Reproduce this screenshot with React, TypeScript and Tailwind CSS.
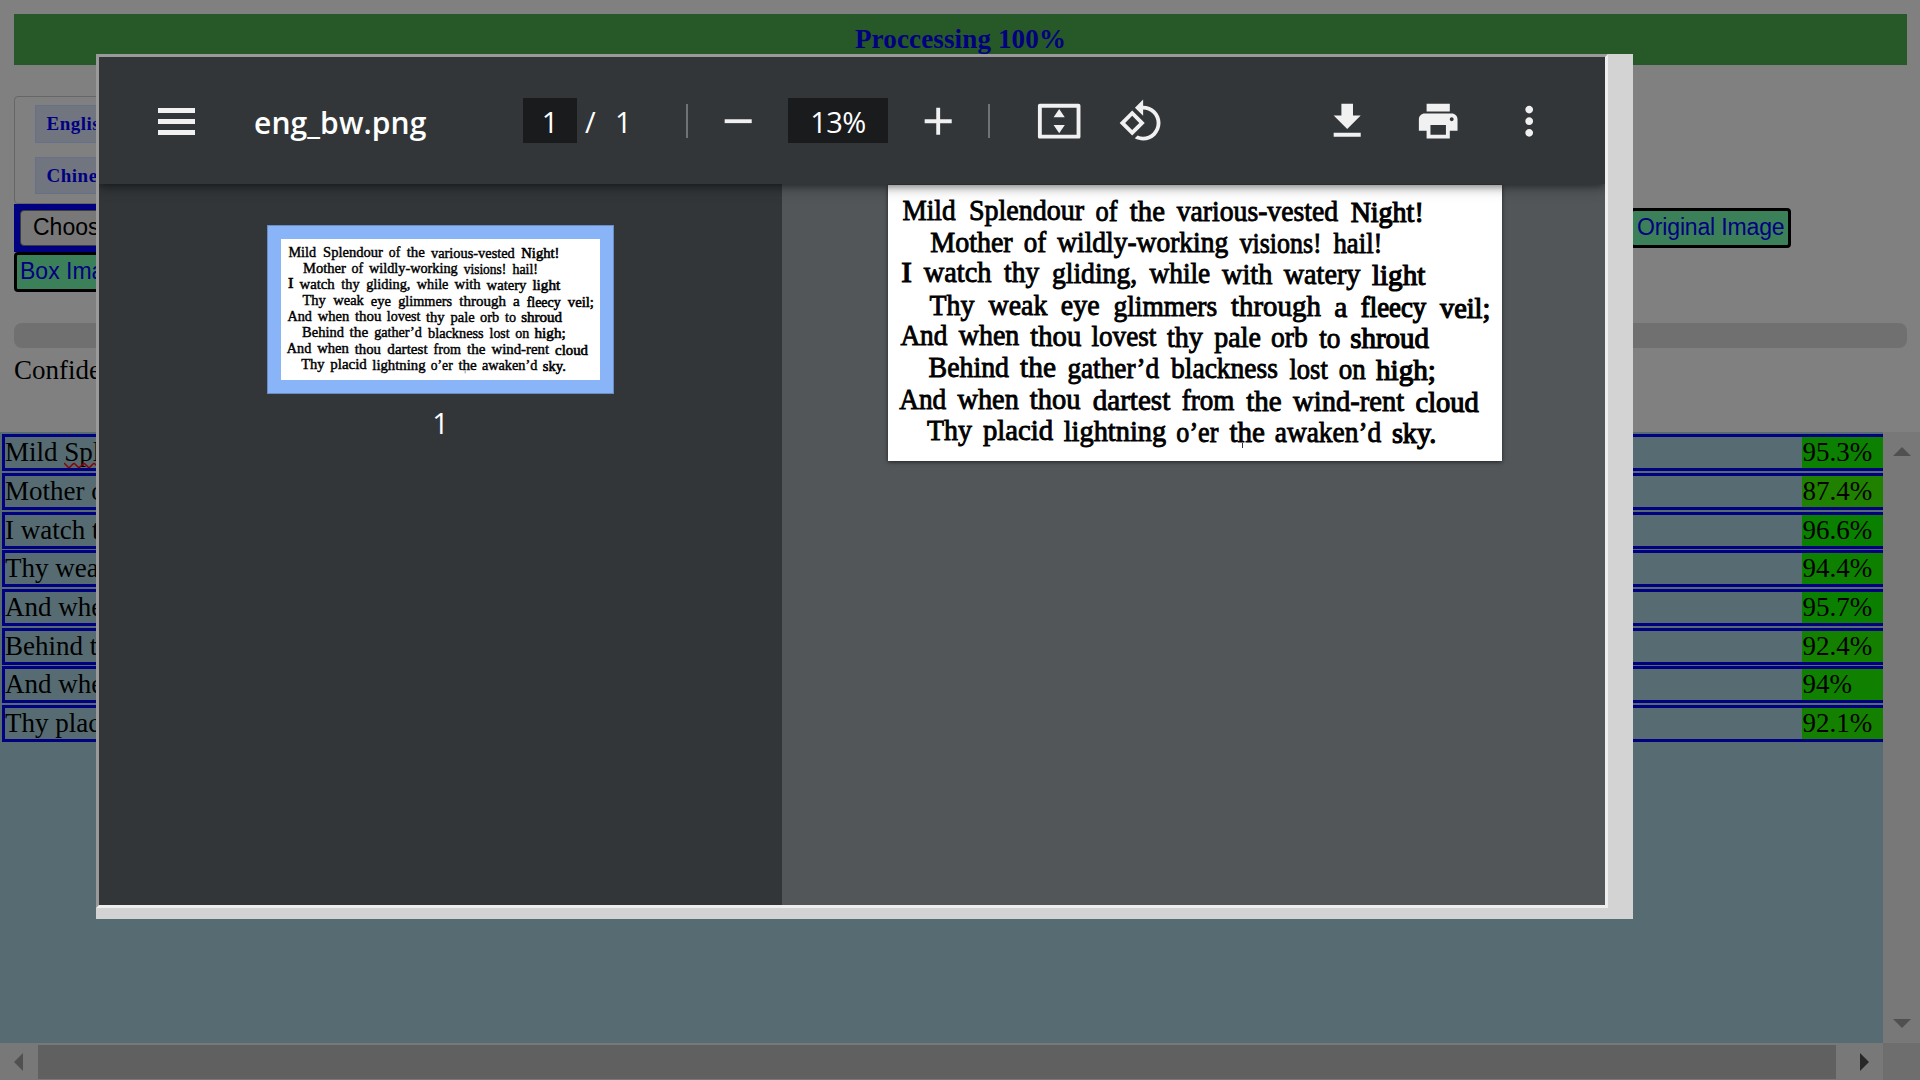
import React from "react";

type Word = [string, number, number];
type Line = { y: number; slope: number; words: Word[] };

// Word extents on the scanned sheet, in sheet units.
const POEM: Line[] = [
  { y: 118, slope: 8, words: [["Mild", 80, 210], ["Splendour", 243, 525], ["of", 553, 607], ["the", 637, 723], ["various-vested", 752, 1147], ["Night!", 1178, 1357]] },
  { y: 212, slope: 8, words: [["Mother", 148, 350], ["of", 377, 432], ["wildly-working", 459, 878], ["visions!", 906, 1107], ["hail!", 1136, 1256]] },
  { y: 303, slope: 10, words: [["I", 77, 103], ["watch", 132, 298], ["thy", 329, 415], ["gliding,", 446, 655], ["while", 685, 834], ["with", 863, 986], ["watery", 1014, 1202], ["light", 1230, 1361]] },
  { y: 401, slope: 10, words: [["Thy", 146, 256], ["weak", 291, 435], ["eye", 468, 563], ["glimmers", 597, 851], ["through", 885, 1105], ["a", 1138, 1170], ["fleecy", 1203, 1363], ["veil;", 1397, 1520]] },
  { y: 492, slope: 11, words: [["And", 75, 190], ["when", 218, 366], ["thou", 393, 518], ["lovest", 543, 702], ["thy", 728, 816], ["pale", 844, 958], ["orb", 983, 1073], ["to", 1101, 1153], ["shroud", 1177, 1370]] },
  { y: 587, slope: 11, words: [["Behind", 144, 341], ["the", 368, 456], ["gather’d", 484, 709], ["blackness", 738, 1000], ["lost", 1028, 1122], ["on", 1149, 1215], ["high;", 1240, 1387]] },
  { y: 683, slope: 10, words: [["And", 72, 187], ["when", 215, 365], ["thou", 392, 516], ["dartest", 546, 736], ["from", 764, 893], ["the", 922, 1009], ["wind-rent", 1037, 1309], ["cloud", 1337, 1492]] },
  { y: 777, slope: 11, words: [["Thy", 140, 250], ["placid", 277, 449], ["lightning", 475, 726], ["o’er", 751, 854], ["the", 881, 968], ["awaken’d", 992, 1253], ["sky.", 1279, 1388]] },
];

function Scan({ className }: { className: string }) {
  return (
    <svg className={className} viewBox="0 0 614 276" preserveAspectRatio="none">
      {POEM.map((line, i) =>
        line.words.map(([text, a, b], j) => (
          <text
            key={`${i}-${j}`}
            x={(a - 44.5) / 2.45}
            y={(line.y + (line.slope * a) / 1400 - 13) / 3}
            textLength={(b - a) / 2.45}
            lengthAdjust="spacingAndGlyphs"
            fontFamily='"Liberation Serif", serif'
            fontSize="30"
            fill="#000"
            stroke="#000"
            strokeWidth={a > 1170 || text === "I" ? 1.2 : 0.9}
          >
            {text}
          </text>
        )),
      )}
      <path d="M354.500 258v5" stroke="#333" strokeWidth="1" />
    </svg>
  );
}

const ROWS: { text: string; mark?: string; score: number; gap: string }[] = [
  { text: "Mild ", mark: "Splendour", score: 95.3, gap: "mt-0.5" },
  { text: "Mother of wildly-working visions! hail!", score: 87.4, gap: "mt-0.5" },
  { text: "I watch thy gliding, while with watery light", score: 96.6, gap: "mt-0.5" },
  { text: "Thy weak eye glimmers through a fleecy veil;", score: 94.4, gap: "mt-px" },
  { text: "And when thou lovest thy pale orb to shroud", score: 95.7, gap: "mt-0.5" },
  { text: "Behind the gather’d blackness lost on high;", score: 92.4, gap: "mt-0.5" },
  { text: "And when thou dartest from the wind-rent cloud", score: 94, gap: "mt-px" },
  { text: "Thy placid lightning o’er the awaken’d sky.", score: 92.1, gap: "mt-0.5" },
];

function Icon({ d, className }: { d: string; className: string }) {
  return (
    <svg viewBox="0 0 24 24" className={`size-[46.400px] shrink-0 fill-[#f1f1f1] ${className}`}>
      <path d={d} />
    </svg>
  );
}

function Results() {
  return (
    <div className="flex h-[611px]">
      <div className="w-[1883px] overflow-hidden bg-[#566c72] pl-0.5 text-[27px] leading-[31px] text-black">
        {ROWS.map((r) => (
          <div key={r.score} className={`flex h-[37px] w-[1960px] border-[3px] border-[#000080] ${r.gap}`}>
            <div className="w-[1797px] whitespace-pre">
              {r.text}
              {r.mark && (
                <span className="relative">
                  {r.mark}
                  <svg className="absolute top-[25px] left-0 h-[7px] w-[100px]" viewBox="0 0 100 7">
                    <path
                      d="M0 1 L4 5 Q5 6 6 5 L9 2 Q10 1 11 2 L14 5 Q15 6 16 5 L19 2 Q20 1 21 2 L24 5 Q25 6 26 5 L29 2 Q30 1 31 2 L34 5"
                      fill="none"
                      stroke="#8b0000"
                      strokeWidth="1.500"
                    />
                  </svg>
                </span>
              )}
            </div>
            <div className="flex-1 pl-[0.500px]" style={{ backgroundColor: `rgb(${Math.round((100 - r.score) * 2.55)},128,0)` }}>
              {r.score}%
            </div>
          </div>
        ))}
      </div>
      <div className="flex flex-1 flex-col items-center justify-between bg-[#787878] pt-[15px] pb-[15px]">
        <svg className="h-[9px] w-[18px]" viewBox="0 0 18 9"><path d="M0 9L9 0L18 9z" fill="#505050" /></svg>
        <svg className="h-[9px] w-[18px]" viewBox="0 0 18 9"><path d="M0 0L9 9L18 0z" fill="#505050" /></svg>
      </div>
    </div>
  );
}

function HScroll() {
  return (
    <div className="flex h-[37px] bg-[#787878]">
      <div className="flex w-[38px] items-center pl-3.5">
        <svg className="h-[18px] w-[9px]" viewBox="0 0 9 18"><path d="M9 0L0 9L9 18z" fill="#505050" /></svg>
      </div>
      <div className="mt-0.5 h-[34px] w-[1798px] bg-[#606060]" />
      <div className="flex w-[47px] items-center pl-6">
        <svg className="h-[18px] w-[9px]" viewBox="0 0 9 18"><path d="M0 0L9 9L0 18z" fill="#282828" /></svg>
      </div>
      <div className="flex-1 bg-[#6e6e6e]" />
    </div>
  );
}

function Toolbar() {
  return (
    <div className="relative z-10 flex h-[127px] items-center bg-[#323639] font-['Open_Sans','Noto_Sans',sans-serif] text-white shadow-[0_2px_8px_rgba(0,0,0,0.45),0_4px_14px_rgba(0,0,0,0.2)]">
      <div className="mt-px ml-[59px] flex w-[37px] shrink-0 flex-col gap-1.5">
        <div className="h-[5px] bg-[#f1f1f1]" />
        <div className="h-[5px] bg-[#f1f1f1]" />
        <div className="h-[5px] bg-[#f1f1f1]" />
      </div>
      <div className="ml-[59px] w-[269px] pt-[3px] text-[30px] font-semibold tracking-[0.100px] whitespace-nowrap">eng_bw.png</div>
      <div className="flex h-[45px] w-[54px] items-center justify-center bg-[#191b1d] pt-[3px] text-[29px]">1</div>
      <div className="ml-2 w-[18px] pt-[3px] text-[29px]">/</div>
      <div className="ml-[12px] w-[20px] pt-[3px] text-[29px]">1</div>
      <div className="ml-[51px] h-[34px] w-0.5 bg-[#707376]" />
      <Icon className="mt-px ml-[26.500px]" d="M5 11h14v2H5z" />
      <div className="ml-[27.100px] flex h-[45px] w-[100px] items-center justify-center bg-[#191b1d] pt-[3px] text-[29px] tracking-[-0.600px]">13%</div>
      <Icon className="mt-px ml-[26.900px]" d="M19 13h-6v6h-2v-6H5v-2h6V5h2v6h6z" />
      <div className="ml-[27.100px] h-[34px] w-0.5 bg-[#707376]" />
      <Icon className="mt-px ml-[45.500px]" d="M22 3H2C1.400 3 1 3.400 1 4v16c0 .6.4 1 1 1h20c.6 0 1-.4 1-1V4c0-.6-.4-1-1-1zM21 19H3V5h18zM12 5.700L9.100 10h5.800zM12 18.300L9.100 14h5.800z" />
      <Icon className="mt-px ml-[35.500px]" d="M7.34 6.41L.86 12.9l6.49 6.48 6.49-6.48-6.5-6.49zM3.69 12.9l3.66-3.66L11 12.9l-3.66 3.66-3.65-3.66zm15.67-6.26C17.61 4.88 15.3 4 13 4V.76L8.76 5 13 9.24V6c1.79 0 3.58.68 4.95 2.05 2.73 2.73 2.73 7.17 0 9.9C16.58 19.32 14.79 20 13 20c-.97 0-1.94-.21-2.84-.61l-1.49 1.49C10.02 21.62 11.51 22 13 22c2.3 0 4.61-.88 6.36-2.64 3.52-3.51 3.52-9.21 0-12.72z" />
      <Icon className="mt-px ml-[159.500px]" d="M19 9h-4V3H9v6H5l7 7 7-7zM5 18v2h14v-2H5z" />
      <Icon className="mt-px ml-[44.900px]" d="M19 8H5c-1.660 0-3 1.340-3 3v6h4v4h12v-4h4v-6c0-1.660-1.340-3-3-3zm-3 11H8v-5h8v5zm3-7c-.55 0-1-.45-1-1s.45-1 1-1 1 .45 1 1-.45 1-1 1zm-1-9H6v4h12V3z" />
      <Icon className="mt-px ml-[44.500px]" d="M12 8c1.100 0 2-.9 2-2s-.9-2-2-2-2 .9-2 2 .9 2 2 2zm0 2c-1.100 0-2 .9-2 2s.9 2 2 2 2-.9 2-2-.9-2-2-2zm0 6c-1.100 0-2 .9-2 2s.9 2 2 2 2-.9 2-2-.9-2-2-2z" />
    </div>
  );
}

function Viewer() {
  return (
    <div className="absolute top-[54px] left-[96px] h-[865px] w-[1537px] bg-[#d3d3d3]">
      <div className="h-[854px] w-[1512px] overflow-hidden border-[3px] border-t-[#9a9a9a] border-r-[#eeeeee] border-b-[#eeeeee] border-l-[#9a9a9a]">
        <Toolbar />
        <div className="flex h-[721px]">
          <div className="w-[683px] bg-[#323639] pt-[41px]">
            <div className="ml-[168px] h-[169px] w-[347px] border border-[#6c8cc4] bg-[#8ab4f8] p-[13px]">
              <Scan className="h-full w-full bg-white" />
            </div>
            <div className="mt-[8px] ml-[168px] w-[347px] text-center font-['Open_Sans','Noto_Sans',sans-serif] text-[29px] leading-[42px] text-white">1</div>
          </div>
          <div className="flex-1 bg-[#525659] pt-px pl-[106px]">
            <Scan className="h-[276px] w-[614px] bg-white shadow-[0_1px_4px_rgba(0,0,0,0.6)]" />
          </div>
        </div>
      </div>
    </div>
  );
}

export default function App() {
  return (
    <div className="relative h-[1080px] w-[1920px] overflow-hidden bg-[#808080] font-['Liberation_Serif',serif]">
      <div className="h-[432px] px-3.5 pt-3.5">
        <div className="h-[51px] w-[1893px] bg-[#265828] text-center text-[27px] leading-[50px] font-bold tracking-[0.150px] text-[#000080]">Proccessing 100%</div>
        <div className="mt-[31px] flex h-[108px] w-[400px] flex-col items-start rounded-[4px] border border-[#666666] pt-2 pl-5 text-[19px] font-bold tracking-[0.500px] text-[#000080]">
          <div className="h-[38px] border border-[#667088] bg-[#70757f] px-[10.500px] leading-[35px]">English</div>
          <div className="mt-3.5 h-[37px] border border-[#667088] bg-[#70757f] px-[10.500px] leading-[35px]">Chinese</div>
        </div>
        <div className="flex items-start font-['Liberation_Sans',sans-serif] text-[23px]">
          <div className="h-12 w-[1616px] border-[6px] border-[#000080] bg-[#000080]">
            <div className="h-9 w-[150px] rounded-[4px] border border-[#3b3b3b] bg-[#787878] pl-3 leading-[33px] whitespace-nowrap text-black">Choose File</div>
          </div>
          <div className="mt-1 h-10 w-[161px] rounded-[4px] border-[3px] border-black bg-[#3c805a] pr-[3.500px] text-right leading-[32px] tracking-[-0.150px] whitespace-nowrap text-[#000080]">Original Image</div>
        </div>
        <div className="h-10 w-[130px] rounded-[4px] border-[3px] border-black bg-[#3c805a] pl-[3px] font-['Liberation_Sans',sans-serif] text-[23px] leading-[32px] text-[#000080]">Box Image</div>
        <div className="mt-[31px] h-[25px] w-[1893px] rounded-[8px] bg-[#707070]" />
        <div className="mt-[7px] text-[27px] leading-[31px] text-black">Confidence</div>
      </div>
      <Results />
      <HScroll />
      <Viewer />
    </div>
  );
}
